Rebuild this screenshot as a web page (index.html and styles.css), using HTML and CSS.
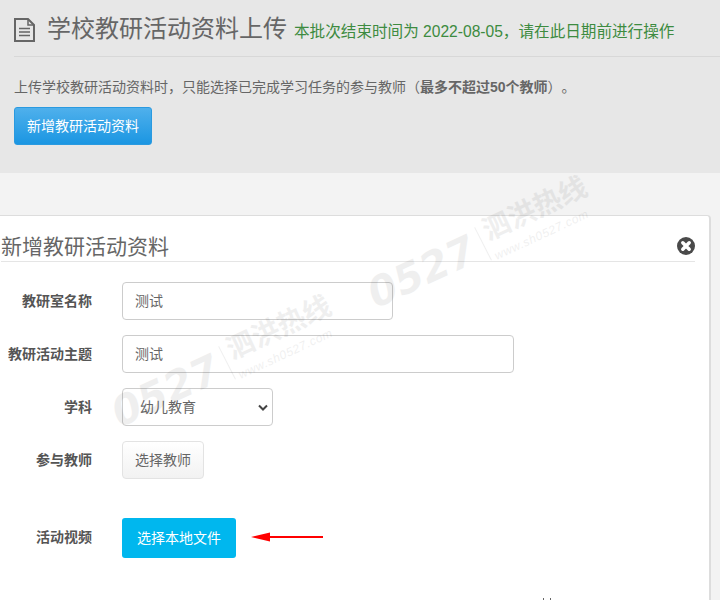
FILE: index.html
```html
<!DOCTYPE html>
<html lang="zh-CN">
<head>
<meta charset="utf-8">
<title>学校教研活动资料上传</title>
<link rel="stylesheet" href="styles.css">
</head>
<body>
<header class="top">
  <div class="title-row">
    <svg class="doc-icon" width="21" height="24" viewBox="0 0 21 24" aria-hidden="true">
      <path d="M1 1H14L20 7V23H1Z" fill="none" stroke="#666" stroke-width="2"/>
      <path d="M14 1V7H20" fill="none" stroke="#666" stroke-width="1.500"/>
      <path d="M5 10.500H16M5 14H16M5 17.500H16" stroke="#666" stroke-width="1.500"/>
    </svg>
    <h1 class="title">学校教研活动资料上传</h1>
    <span class="deadline">本批次结束时间为 2022-08-05，请在此日期前进行操作</span>
  </div>
  <p class="intro">上传学校教研活动资料时，只能选择已完成学习任务的参与教师（<b>最多不超过50个教师</b>）。</p>
  <button class="btn-blue" type="button">新增教研活动资料</button>
</header>
<main class="stage">
  <section class="card">
    <div class="card-head">
      <h2 class="card-title">新增教研活动资料</h2>
      <svg class="close-icon" width="18" height="18" viewBox="0 0 18 18" aria-hidden="true">
        <circle cx="9" cy="9" r="9" fill="#4a4a4a"/>
        <path d="M5.800 5.800L12.200 12.200M12.200 5.800L5.800 12.200" stroke="#fff" stroke-width="3.500" stroke-linecap="round"/>
      </svg>
    </div>
    <div class="form">
      <div class="row row-a"><label class="lab">教研室名称</label><div class="field w-a">测试</div></div>
      <div class="row row-b"><label class="lab">教研活动主题</label><div class="field w-b">测试</div></div>
      <div class="row row-c"><label class="lab">学科</label>
        <div class="field w-c select">幼儿教育
          <svg class="chev" width="10" height="7" viewBox="0 0 10 7" aria-hidden="true"><path d="M1 1.500L5 5.500L9 1.500" fill="none" stroke="#444" stroke-width="2"/></svg>
        </div>
      </div>
      <div class="row row-d"><label class="lab">参与教师</label><button class="btn-light" type="button">选择教师</button></div>
      <div class="row row-e"><label class="lab">活动视频</label><button class="btn-cyan" type="button">选择本地文件</button>
        <svg class="arrow" width="72" height="12" viewBox="0 0 72 12" aria-hidden="true">
          <path d="M0 6L19 1.500V5H72V7H19V10.500Z" fill="#f00"/>
        </svg>
      </div>
    </div>
  </section>
  <div class="mark mark-1"><span class="mark-num">0527</span><i class="mark-bar"></i><span class="mark-side"><span class="mark-cn">泗洪热线</span><span class="mark-url">www.sh0527.com</span></span></div>
  <div class="mark mark-2"><span class="mark-num">0527</span><i class="mark-bar"></i><span class="mark-side"><span class="mark-cn">泗洪热线</span><span class="mark-url">www.sh0527.com</span></span></div>
  <i class="stray"></i>
</main>
</body>
</html>
```
FILE: styles.css
```css
* { box-sizing: border-box; }
html, body { margin: 0; height: 600px; overflow: hidden; }
body {
  width: 720px;
  background: #f3f3f3;
  color: #666;
  font-family: "Liberation Sans", "Noto Sans CJK SC", sans-serif;
  font-size: 14px;
  text-spacing-trim: space-all;
}
.top { height: 173px; background: #e7e7e7; padding: 14px 0 0 14px; }
.title-row {
  display: flex;
  align-items: center;
  height: 43px;
  padding-bottom: 11px;
  border-bottom: 1px solid #d8d8d8;
}
.doc-icon { margin-right: 12px; flex: none; }
.title { margin: 0 0 1px; font-size: 24px; font-weight: 400; color: #666; line-height: 32px; }
.deadline { margin-left: 7px; font-size: 15.6px; color: #3d8b40; padding-top: 1px; }
.intro { margin: 20px 0 0; font-size: 14px; line-height: 20px; }
.intro b { font-weight: 700; }
.btn-blue {
  display: block;
  margin-top: 10px;
  width: 138px;
  height: 38px;
  padding: 0 0 2px;
  border: 1px solid #2a9ae0;
  border-radius: 3px;
  background: linear-gradient(#4fb0ec, #1b96e2);
  color: #fff;
  font: inherit;
}
.stage { position: relative; height: 427px; padding-top: 42px; }
.card {
  width: 711px;
  height: 400px;
  background: #fff;
  border: 1px solid #ddd;
  border-left: 0;
  border-right-width: 2px;
  border-radius: 0 4px 0 0;
  padding: 0 0 0 1px;
}
.card-head {
  display: flex;
  align-items: center;
  justify-content: space-between;
  width: 694px;
  height: 46px;
  padding-top: 16px;
  border-bottom: 1px solid #e5e5e5;
}
.card-title { margin: 0; font-size: 21px; font-weight: 400; color: #666; line-height: 28px; }
.close-icon { flex: none; margin-top: -1px; }
.row { display: flex; align-items: center; }
.row-a { margin-top: 20px; }
.row-b { margin-top: 15px; }
.row-c { margin-top: 15px; }
.row-d { margin-top: 15px; }
.row-e { margin-top: 39px; }
.lab {
  width: 91px;
  margin-right: 30px;
  margin-top: -2px;
  text-align: right;
  font-weight: 700;
  font-size: 14px;
  color: #555;
}
.row-e .lab { margin-top: -4px; }
.field {
  display: flex;
  align-items: center;
  height: 38px;
  padding: 0 12px 2px;
  background: #fff;
  border: 1px solid #ccc;
  border-radius: 4px;
  font-size: 14px;
  color: #666;
}
.w-a { width: 271px; }
.w-b { width: 392px; }
.w-c { width: 151px; }
.select { position: relative; padding-left: 17px; }
.chev { position: absolute; right: 4px; top: 15px; }
.btn-light {
  width: 82px;
  height: 38px;
  padding: 0 0 2px;
  border: 1px solid #e3e3e3;
  border-radius: 4px;
  background: linear-gradient(#fff, #f2f2f2);
  color: #666;
  font: inherit;
}
.btn-cyan {
  width: 114px;
  height: 40px;
  padding: 0 0 2px;
  border: 0;
  border-radius: 3px;
  background: #00b7ee;
  color: #fff;
  font: inherit;
}
.arrow { margin-left: 15px; margin-top: -3px; }
.mark {
  position: absolute;
  display: flex;
  align-items: center;
  height: 60px;
  color: #000;
  opacity: .06;
  transform: rotate(-25deg);
  transform-origin: left center;
  pointer-events: none;
  white-space: nowrap;
}
.mark-1 { left: 370px; top: 93px; }
.mark-2 { left: 114px; top: 212px; }
.mark-num { margin-right: 10px; font-family: "DejaVu Sans", sans-serif; font-size: 41px; font-weight: 700; font-style: italic; }
.mark-bar { width: 1px; height: 37px; margin-right: 5px; background: #000; transform: rotate(-2deg); }
.mark-side { display: flex; flex-direction: column; gap: 5px; }
.mark-cn { font-size: 28px; line-height: 28px; font-weight: 700; }
.mark-url { font-size: 12px; line-height: 14px; letter-spacing: .6px; font-style: italic; }
.stray {
  position: absolute;
  left: 543px;
  top: 425px;
  width: 8px;
  height: 2px;
  border-left: 1px solid #666;
  border-right: 1px solid #666;
}
```
